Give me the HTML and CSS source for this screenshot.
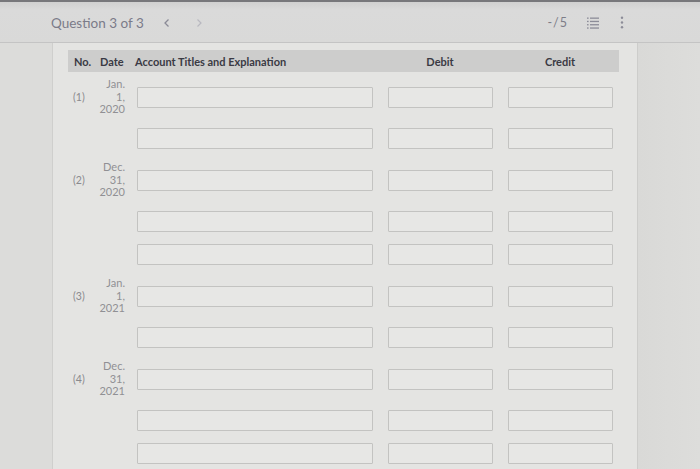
FILE: index.html
```html
<!DOCTYPE html>
<html>
<head>
<meta charset="utf-8">
<link rel="stylesheet" href="styles.css">
</head>
<body>
<div class="page">
  <header class="topbar">
    <div class="title">Question 3 of 3</div>
    <div class="nav">
      <svg class="chev" width="8" height="10" viewBox="0 0 8 10"><path d="M5.5 1.5 L2 5 L5.5 8.5" fill="none" stroke="#8a8a96" stroke-width="1.3"/></svg>
      <svg class="chev next" width="8" height="10" viewBox="0 0 8 10"><path d="M2.5 1.5 L6 5 L2.5 8.5" fill="none" stroke="#b8b8c0" stroke-width="1.2"/></svg>
    </div>
    <div class="spacer"></div>
    <div class="score">-/5</div>
    <svg class="listicon" width="12" height="12" viewBox="0 0 12 12"><g fill="#8c8c98"><rect x="0" y="0.5" width="1.6" height="1.3"/><rect x="3" y="0.5" width="9" height="1.3"/><rect x="0" y="3.8" width="1.6" height="1.3"/><rect x="3" y="3.8" width="9" height="1.3"/><rect x="0" y="7.1" width="1.6" height="1.3"/><rect x="3" y="7.1" width="9" height="1.3"/><rect x="0" y="10.4" width="1.6" height="1.3"/><rect x="3" y="10.4" width="9" height="1.3"/></g></svg>
    <svg class="kebab" width="4" height="13" viewBox="0 0 4 13"><g fill="#8c8c98"><circle cx="2" cy="1.8" r="1.2"/><circle cx="2" cy="6.5" r="1.2"/><circle cx="2" cy="11.2" r="1.2"/></g></svg>
  </header>
  <div class="body">
    <aside class="rail left"></aside>
    <main class="main">
      <div class="journal">
        <div class="head">
          <div class="h-no">No.</div>
          <div class="h-date">Date</div>
          <div class="h-acct">Account Titles and Explanation</div>
          <div class="h-num">Debit</div>
          <div class="h-num">Credit</div>
        </div>

        <div class="row dated">
          <div class="no">(1)</div>
          <div class="date">Jan.<br>1,<br>2020</div>
          <div class="cell acct"><div class="field"></div></div>
          <div class="cell num"><div class="field"></div></div>
          <div class="cell num"><div class="field"></div></div>
        </div>
        <div class="row">
          <div class="no"></div><div class="date"></div>
          <div class="cell acct"><div class="field"></div></div>
          <div class="cell num"><div class="field"></div></div>
          <div class="cell num"><div class="field"></div></div>
        </div>

        <div class="row dated">
          <div class="no">(2)</div>
          <div class="date">Dec.<br>31,<br>2020</div>
          <div class="cell acct"><div class="field"></div></div>
          <div class="cell num"><div class="field"></div></div>
          <div class="cell num"><div class="field"></div></div>
        </div>
        <div class="row">
          <div class="no"></div><div class="date"></div>
          <div class="cell acct"><div class="field"></div></div>
          <div class="cell num"><div class="field"></div></div>
          <div class="cell num"><div class="field"></div></div>
        </div>
        <div class="row">
          <div class="no"></div><div class="date"></div>
          <div class="cell acct"><div class="field"></div></div>
          <div class="cell num"><div class="field"></div></div>
          <div class="cell num"><div class="field"></div></div>
        </div>

        <div class="row dated">
          <div class="no">(3)</div>
          <div class="date">Jan.<br>1,<br>2021</div>
          <div class="cell acct"><div class="field"></div></div>
          <div class="cell num"><div class="field"></div></div>
          <div class="cell num"><div class="field"></div></div>
        </div>
        <div class="row">
          <div class="no"></div><div class="date"></div>
          <div class="cell acct"><div class="field"></div></div>
          <div class="cell num"><div class="field"></div></div>
          <div class="cell num"><div class="field"></div></div>
        </div>

        <div class="row dated">
          <div class="no">(4)</div>
          <div class="date">Dec.<br>31,<br>2021</div>
          <div class="cell acct"><div class="field"></div></div>
          <div class="cell num"><div class="field"></div></div>
          <div class="cell num"><div class="field"></div></div>
        </div>
        <div class="row">
          <div class="no"></div><div class="date"></div>
          <div class="cell acct"><div class="field"></div></div>
          <div class="cell num"><div class="field"></div></div>
          <div class="cell num"><div class="field"></div></div>
        </div>
        <div class="row">
          <div class="no"></div><div class="date"></div>
          <div class="cell acct"><div class="field"></div></div>
          <div class="cell num"><div class="field"></div></div>
          <div class="cell num"><div class="field"></div></div>
        </div>
      </div>
    </main>
    <aside class="rail right"></aside>
  </div>
</div>
</body>
</html>
```
FILE: styles.css
```css
* { box-sizing: border-box; }
html, body { margin: 0; padding: 0; }
body {
  width: 700px;
  height: 469px;
  overflow: hidden;
  font-family: Lato, "Open Sans", sans-serif;
  background: #e2e2e0;
}
.page {
  display: flex;
  flex-direction: column;
  height: 469px;
}
.topbar {
  height: 43px;
  flex: none;
  display: flex;
  align-items: center;
  padding-left: 51px;
  padding-right: 76px;
  background: linear-gradient(#d0d0d0, #dadada 20%, #d9d9d8);
  border-top: 2px solid #77777b;
  border-bottom: 1px solid #c4c4c4;
  padding-top: 1px;
}
.title {
  font-size: 13.5px;
  color: #7b7b89;
}
.nav {
  display: flex;
  align-items: center;
  gap: 24px;
  margin-left: 19px;
}
.spacer { flex: 1; }
.score {
  font-size: 12.5px;
  color: #7d7d88;
  letter-spacing: 1px;
  margin-right: 19px;
}
.listicon { margin-right: 21px; }
.body {
  flex: 1;
  display: flex;
  min-height: 0;
}
.rail {
  background: #dcdcda;
}
.rail.left {
  width: 53px;
  border-right: 1px solid #cfcfcd;
}
.rail.right {
  width: 63px;
  border-left: 1px solid #cdcdcb;
  background: linear-gradient(90deg, #d9d9d7, #dddddb);
}
.main {
  flex: 1;
  padding: 7px 0 0 15px;
  background: #e4e4e2;
}
.journal {
  width: 552px;
}
.head, .row {
  display: grid;
  grid-template-columns: 30px 32px 250px 120px 120px;
  align-items: center;
}
.head {
  height: 22px;
  background: #cdcdcc;
  font-size: 11px;
  font-weight: 700;
  color: #3a3a44;
  width: 551px;
}
.h-no { padding-left: 6px; }
.h-date { padding-left: 2px; }
.h-acct { padding-left: 5px; }
.h-num { text-align: center; }
.row { height: 33px; }
.row.dated { height: 50px; }
.no {
  font-size: 10.5px;
  color: #8a8a8e;
  padding-left: 5px;
}
.date {
  font-size: 11px;
  line-height: 12.5px;
  color: #909094;
  text-align: right;
  padding-right: 5px;
}
.cell.acct { padding: 0 7px; }
.cell.num { padding: 0 7px 0 8px; }
.field {
  height: 21px;
  border: 1px solid #c3c3c1;
  border-radius: 1px;
  background: #e7e7e5;
}
```
